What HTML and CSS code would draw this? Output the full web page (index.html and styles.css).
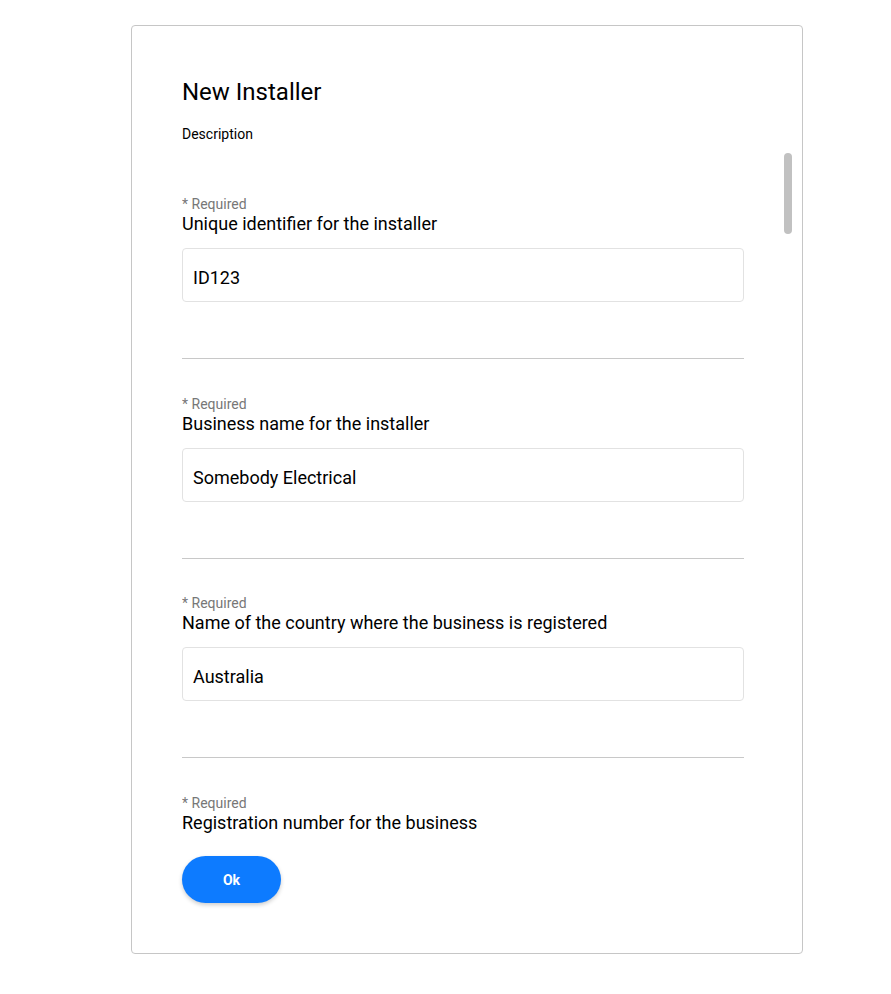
FILE: index.html
```html
<!DOCTYPE html>
<html>
<head>
<meta charset="utf-8">
<link rel="stylesheet" href="styles.css">
</head>
<body>
<div class="card">
  <h1 class="title">New Installer</h1>
  <div class="desc">Description</div>
  <div class="scroll">
    <div class="field">
      <div class="req">* Required</div>
      <div class="label">Unique identifier for the installer</div>
      <div class="input">ID123</div>
      <div class="divider"></div>
    </div>
    <div class="field">
      <div class="req">* Required</div>
      <div class="label">Business name for the installer</div>
      <div class="input">Somebody Electrical</div>
      <div class="divider"></div>
    </div>
    <div class="field">
      <div class="req">* Required</div>
      <div class="label">Name of the country where the business is registered</div>
      <div class="input">Australia</div>
      <div class="divider"></div>
    </div>
    <div class="field">
      <div class="req">* Required</div>
      <div class="label">Registration number for the business</div>
      <div class="input"></div>
      <div class="divider"></div>
    </div>
    <div class="thumb"></div>
  </div>
  <button class="ok">Ok</button>
</div>
</body>
</html>
```
FILE: styles.css
```css
* { box-sizing: border-box; }
html, body { margin: 0; padding: 0; background: #fff; }
body {
  font-family: Roboto, "Liberation Sans", sans-serif;
  color: #000;
  padding: 25px 0 0 131px;
}
.card {
  width: 672px;
  height: 929px;
  border: 1px solid #c6c6c6;
  border-radius: 4px;
  padding: 53px 7px 50px 50px;
  display: flex;
  flex-direction: column;
}
.title {
  margin: 0;
  font-size: 24px;
  line-height: 26px;
  font-weight: 400;
}
.desc {
  margin-top: 21px;
  font-size: 14px;
  line-height: 16px;
}
.scroll {
  position: relative;
  margin-top: 8px;
  height: 688px;
  overflow: hidden;
  padding: 46px 51px 0 0;
}
.field {
  height: 199.5px;
}
.req {
  font-size: 14px;
  line-height: 16px;
  color: #777;
}
.label {
  font-size: 18px;
  line-height: 20px;
  margin-top: 2px;
}
.input {
  margin-top: 14px;
  height: 54px;
  border: 1px solid #e2e2e2;
  border-radius: 4px;
  padding: 6px 10px 0;
  font-size: 18px;
  line-height: 46px;
}
.divider {
  margin-top: 56px;
  height: 1px;
  background: #c8c8c8;
}
.thumb {
  position: absolute;
  top: 3px;
  right: 3px;
  width: 8px;
  height: 81px;
  border-radius: 4px;
  background: #c1c1c1;
}
.ok {
  margin-top: 18px;
  width: 99px;
  height: 47px;
  border: none;
  border-radius: 24px;
  background: #0d7bff;
  color: #fff;
  font-family: Roboto, "Liberation Sans", sans-serif;
  font-weight: 700;
  font-size: 14px;
  box-shadow: 0 2px 4px rgba(0,0,0,0.2);
  padding: 0;
}
```
